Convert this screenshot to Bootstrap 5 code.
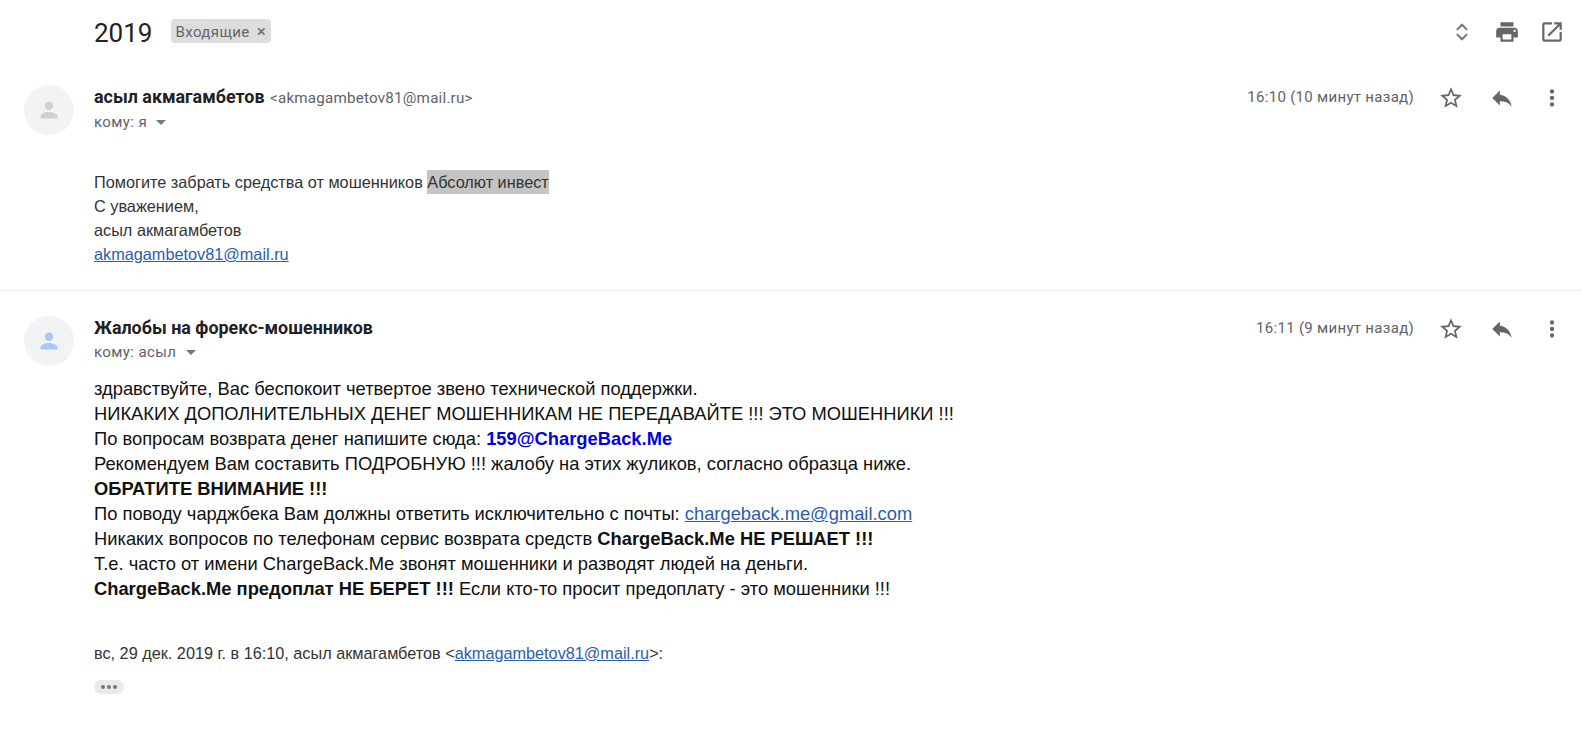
<!DOCTYPE html>
<html lang="ru">
<head>
    <meta charset="UTF-8">
    <title>2019 - Входящие</title>
    <link href="https://cdn.jsdelivr.net/npm/bootstrap@5.3.3/dist/css/bootstrap.min.css" rel="stylesheet">
    <style>
        body {
            background: #fff;
            color: #222;
            font-family: "Liberation Sans", Arial, sans-serif;
            overflow: hidden;
        }
        .subject-bar {
            height: 64px;
            padding: 0 17px 0 94px;
        }
        .subject-text {
            font-family: Roboto, sans-serif;
            font-size: 26px;
            line-height: 32px;
            padding-top: 1px;
            color: #222;
            margin: 0 19px 0 0;
        }
        .label-chip {
            background: #ddd;
            color: #666;
            font-family: Roboto, sans-serif;
            font-size: 15px;
            letter-spacing: .4px;
            border-radius: 4px;
            padding: 0 5px 0 4px;
            height: 24px;
            line-height: 24px;
            margin-bottom: 2px;
        }
        .label-chip b {
            font-weight: 400;
            font-size: 17px;
            margin-left: 7px;
        }
        .tool-icon {
            fill: #666;
            display: block;
        }
        .tools {
            gap: 19px;
        }
        .msg-one {
            height: 227px;
            border-bottom: 1px solid #eee;
            padding-top: 21px;
        }
        .msg-two {
            padding-top: 25px;
        }
        .avatar-col {
            width: 94px;
            padding-left: 24px;
            flex: none;
        }
        .avatar-circle {
            width: 50px;
            height: 50px;
            background: #f1f3f4;
            border-radius: 50%;
        }
        .msg-main {
            padding-right: 17px;
        }
        .sender-name {
            font-family: Roboto, sans-serif;
            font-size: 17.9px;
            font-weight: 700;
            color: #202124;
            line-height: 24px;
        }
        .sender-mail {
            font-family: Roboto, sans-serif;
            font-size: 15.2px;
            color: #5f6368;
            letter-spacing: .2px;
            margin-left: 1px;
        }
        .to-line {
            font-family: Roboto, sans-serif;
            font-size: 15px;
            color: #5f6368;
            letter-spacing: .4px;
            line-height: 24px;
        }
        .to-caret {
            display: inline-block;
            width: 0;
            height: 0;
            border-left: 5px solid transparent;
            border-right: 5px solid transparent;
            border-top: 5px solid #777;
            margin-left: 5px;
            vertical-align: 2px;
        }
        .msg-time {
            font-family: Roboto, sans-serif;
            font-size: 15px;
            color: #5f6368;
            letter-spacing: .3px;
            line-height: 24px;
            margin-right: 24px;
        }
        .msg-actions {
            gap: 24.5px;
        }
        .msg-text-one {
            font-size: 16.27px;
            line-height: 24.2px;
            margin-top: 35.5px;
            color: #333;
        }
        .msg-text-one mark {
            display: inline-block;
            background: #c4c4c4;
            color: #333;
            padding: 0;
        }
        .msg-text-two {
            font-size: 18.33px;
            line-height: 25px;
            margin-top: 12px;
            color: #111;
        }
        .mail-link {
            color: #2a5db0;
        }
        .support-mail {
            color: #0000e0;
            font-weight: 700;
        }
        .quote-line {
            font-size: 16.25px;
            line-height: 24px;
            margin-top: 40px;
            color: #333;
        }
        .dots-pill {
            width: 30px;
            height: 14px;
            background: #e8eaed;
            border-radius: 7px;
            margin-top: 15px;
            gap: 2px;
        }
        .dots-pill i {
            width: 4px;
            height: 4px;
            border-radius: 50%;
            background: #777;
        }
    </style>
</head>
<body>
    <div class="subject-bar d-flex align-items-center">
        <h1 class="subject-text fw-normal">2019</h1>
        <span class="label-chip">Входящие<b>×</b></span>
        <div class="tools d-flex align-items-center ms-auto">
            <svg class="tool-icon" width="26" height="26" viewBox="0 0 24 24"><path d="M6.6 9.4 12 4l5.4 5.4-1.3 1.2L12 6.6l-4.1 4zM6.6 14.6l1.3-1.2 4.1 4 4.1-4 1.3 1.2L12 20z" fill="#757575"/></svg>
            <svg class="tool-icon" width="26" height="26" viewBox="0 0 24 24"><path d="M19 8H5c-1.66 0-3 1.34-3 3v6h4v4h12v-4h4v-6c0-1.66-1.34-3-3-3zm-3 11H8v-5h8v5zm3-7c-.55 0-1-.45-1-1s.45-1 1-1 1 .45 1 1-.45 1-1 1zm-1-9H6v4h12V3z"/></svg>
            <svg class="tool-icon" width="26" height="26" viewBox="0 0 24 24"><path d="M19 19H5V5h7V3H5a2 2 0 0 0-2 2v14a2 2 0 0 0 2 2h14c1.1 0 2-.9 2-2v-7h-2v7zM14 3v2h3.59l-9.83 9.83 1.41 1.41L19 6.41V10h2V3h-7z"/></svg>
        </div>
    </div>

    <div class="msg-one d-flex">
        <div class="avatar-col">
            <div class="avatar-circle d-flex align-items-center justify-content-center">
                <svg width="28" height="28" viewBox="0 0 24 24"><path d="M12 12a3.6 3.6 0 1 0 0-7.2 3.6 3.6 0 0 0 0 7.2zm0 1.8c-2.4 0-7.2 1.2-7.2 3.6v1.8h14.4v-1.8c0-2.4-4.8-3.6-7.2-3.6z" fill="#d0d0d0"/></svg>
            </div>
        </div>
        <div class="msg-main flex-grow-1">
            <div class="d-flex">
                <div class="flex-grow-1">
                    <div class="sender-name">асыл акмагамбетов <span class="sender-mail fw-normal">&lt;akmagambetov81@mail.ru&gt;</span></div>
                    <div class="to-line">кому: я <span class="to-caret"></span></div>
                </div>
                <div class="d-flex align-items-start">
                    <span class="msg-time">16:10 (10 минут назад)</span>
                    <div class="msg-actions d-flex">
                        <svg class="tool-icon" width="26" height="26" viewBox="0 0 24 24"><path d="m22 9.24-7.19-.62L12 2 9.19 8.63 2 9.24l5.46 4.73L5.82 21 12 17.27 18.18 21l-1.63-7.03L22 9.24zM12 15.4l-3.76 2.27 1-4.28-3.32-2.88 4.38-.38L12 6.1l1.71 4.04 4.38.38-3.32 2.88 1 4.28L12 15.4z"/></svg>
                        <svg class="tool-icon" width="26" height="26" viewBox="0 0 24 24"><path d="M10 9V5l-7 7 7 7v-4.1c5 0 8.5 1.6 11 5.1-1-5-4-10-11-11z"/></svg>
                        <svg class="tool-icon" width="26" height="26" viewBox="0 0 24 24"><path d="M12 8a2 2 0 1 0 0-4 2 2 0 0 0 0 4zm0 2a2 2 0 1 0 0 4 2 2 0 0 0 0-4zm0 6a2 2 0 1 0 0 4 2 2 0 0 0 0-4z"/></svg>
                    </div>
                </div>
            </div>
            <div class="msg-text-one">
                Помогите забрать средства от мошенников <mark>Абсолют инвест</mark><br>
                С уважением,<br>
                асыл акмагамбетов<br>
                <a class="mail-link" href="#">akmagambetov81@mail.ru</a>
            </div>
        </div>
    </div>

    <div class="msg-two d-flex">
        <div class="avatar-col">
            <div class="avatar-circle d-flex align-items-center justify-content-center">
                <svg width="28" height="28" viewBox="0 0 24 24"><path d="M12 12a3.6 3.6 0 1 0 0-7.2 3.6 3.6 0 0 0 0 7.2zm0 1.8c-2.4 0-7.2 1.2-7.2 3.6v1.8h14.4v-1.8c0-2.4-4.8-3.6-7.2-3.6z" fill="#a8c7fa"/></svg>
            </div>
        </div>
        <div class="msg-main flex-grow-1">
            <div class="d-flex">
                <div class="flex-grow-1">
                    <div class="sender-name">Жалобы на форекс-мошенников</div>
                    <div class="to-line">кому: асыл <span class="to-caret"></span></div>
                </div>
                <div class="d-flex align-items-start">
                    <span class="msg-time">16:11 (9 минут назад)</span>
                    <div class="msg-actions d-flex">
                        <svg class="tool-icon" width="26" height="26" viewBox="0 0 24 24"><path d="m22 9.24-7.19-.62L12 2 9.19 8.63 2 9.24l5.46 4.73L5.82 21 12 17.27 18.18 21l-1.63-7.03L22 9.24zM12 15.4l-3.76 2.27 1-4.28-3.32-2.88 4.38-.38L12 6.1l1.71 4.04 4.38.38-3.32 2.88 1 4.28L12 15.4z"/></svg>
                        <svg class="tool-icon" width="26" height="26" viewBox="0 0 24 24"><path d="M10 9V5l-7 7 7 7v-4.1c5 0 8.5 1.6 11 5.1-1-5-4-10-11-11z"/></svg>
                        <svg class="tool-icon" width="26" height="26" viewBox="0 0 24 24"><path d="M12 8a2 2 0 1 0 0-4 2 2 0 0 0 0 4zm0 2a2 2 0 1 0 0 4 2 2 0 0 0 0-4zm0 6a2 2 0 1 0 0 4 2 2 0 0 0 0-4z"/></svg>
                    </div>
                </div>
            </div>
            <div class="msg-text-two">
                здравствуйте, Вас беспокоит четвертое звено технической поддержки.<br>
                НИКАКИХ ДОПОЛНИТЕЛЬНЫХ ДЕНЕГ МОШЕННИКАМ НЕ ПЕРЕДАВАЙТЕ !!! ЭТО МОШЕННИКИ !!!<br>
                По вопросам возврата денег напишите сюда: <span class="support-mail">159@ChargeBack.Me</span><br>
                Рекомендуем Вам составить ПОДРОБНУЮ !!! жалобу на этих жуликов, согласно образца ниже.<br>
                <b>ОБРАТИТЕ ВНИМАНИЕ !!!</b><br>
                По поводу чарджбека Вам должны ответить исключительно с почты: <a class="mail-link" href="#">chargeback.me@gmail.com</a><br>
                Никаких вопросов по телефонам сервис возврата средств <b>ChargeBack.Me НЕ РЕШАЕТ !!!</b><br>
                Т.е. часто от имени ChargeBack.Me звонят мошенники и разводят людей на деньги.<br>
                <b>ChargeBack.Me предоплат НЕ БЕРЕТ !!!</b> Если кто-то просит предоплату - это мошенники !!!
            </div>
            <div class="quote-line">вс, 29 дек. 2019 г. в 16:10, асыл акмагамбетов &lt;<a class="mail-link" href="#">akmagambetov81@mail.ru</a>&gt;:</div>
            <div class="dots-pill d-flex align-items-center justify-content-center"><i></i><i></i><i></i></div>
        </div>
    </div>
    <script src="https://cdn.jsdelivr.net/npm/bootstrap@5.3.3/dist/js/bootstrap.bundle.min.js"></script>
</body>
</html>
